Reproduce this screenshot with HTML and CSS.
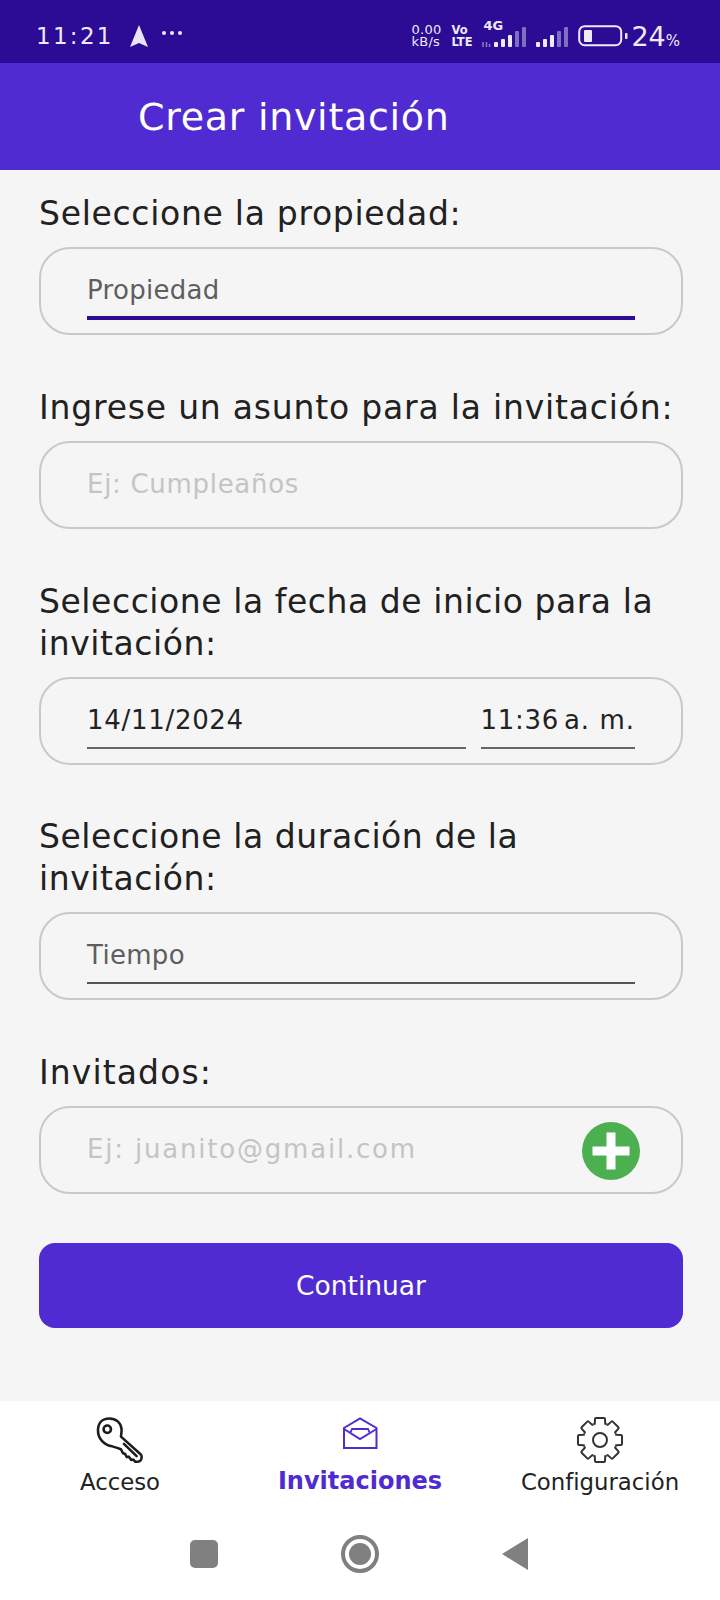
FILE: index.html
```html
<!DOCTYPE html>
<html lang="es">
<head>
<meta charset="utf-8">
<title>Crear invitación</title>
<link rel="stylesheet" href="styles.css">
</head>
<body>
<div class="screen">
  <div class="status">
    <div class="status-left">
      <span class="clock">11:21</span>
      <svg class="nav-arrow" width="20" height="24" viewBox="0 0 20 24"><path d="M10 1 L19 23 L10 19 L1 23 Z" fill="#e8e6f6"/></svg>
      <span class="dots"><i></i><i></i><i></i></span>
    </div>
    <div class="status-right">
      <span class="speed">0.00<br>kB/s</span>
      <span class="volte">Vo<br>LTE</span>
      <span class="net">
        <span class="fourg">4G</span>
        <svg width="56" height="24" viewBox="0 0 56 24">
          <path d="M3 16v5M6.500 16v5M9.500 18v3" stroke="#8d7fc9" stroke-width="1.500"/>
          <rect x="14" y="16" width="4" height="5" rx="1" fill="#eeeaf9"/>
          <rect x="21" y="13" width="4" height="8" rx="1" fill="#eeeaf9"/>
          <rect x="28" y="9" width="4" height="12" rx="1" fill="#eeeaf9"/>
          <rect x="35" y="5" width="4" height="16" rx="1" fill="#7e6fc0"/>
          <rect x="42" y="1" width="4" height="20" rx="1" fill="#7e6fc0"/>
        </svg>
      </span>
      <svg class="signal" width="36" height="24" viewBox="0 0 36 24">
        <rect x="0" y="16" width="4" height="5" rx="1" fill="#eeeaf9"/>
        <rect x="7" y="13" width="4" height="8" rx="1" fill="#eeeaf9"/>
        <rect x="14" y="9" width="4" height="12" rx="1" fill="#eeeaf9"/>
        <rect x="21" y="5" width="4" height="16" rx="1" fill="#7e6fc0"/>
        <rect x="28" y="1" width="4" height="20" rx="1" fill="#7e6fc0"/>
      </svg>
      <svg class="battery" width="50" height="22" viewBox="0 0 50 22">
        <rect x="1.200" y="1.200" width="42" height="19" rx="5.500" fill="none" stroke="#eeeaf9" stroke-width="2"/>
        <rect x="6" y="5" width="8" height="12" rx="1" fill="#eeeaf9"/>
        <rect x="47" y="8" width="2.500" height="6" rx="1" fill="#eeeaf9"/>
      </svg>
      <span class="pct">24<small>%</small></span>
    </div>
  </div>
  <header class="appbar"><h1>Crear invitación</h1></header>
  <main class="form">
    <section class="group">
      <label class="label">Seleccione la propiedad:</label>
      <div class="field">
        <div class="line line-active value-muted ls-a">Propiedad</div>
      </div>
    </section>
    <section class="group">
      <label class="label label-wide">Ingrese un asunto para la invitación:</label>
      <div class="field">
        <div class="line-none placeholder ls-b">Ej: Cumpleaños</div>
      </div>
    </section>
    <section class="group">
      <label class="label label-tight">Seleccione la fecha de inicio para la invitación:</label>
      <div class="field field-split">
        <div class="line value date">14/11/2024</div>
        <div class="line value time">11:36<span class="ampm">a. m.</span></div>
      </div>
    </section>
    <section class="group">
      <label class="label label-tight">Seleccione la duración de la invitación:</label>
      <div class="field">
        <div class="line line-dark value-muted ls-a">Tiempo</div>
      </div>
    </section>
    <section class="group group-last">
      <label class="label label-short">Invitados:</label>
      <div class="field field-add">
        <div class="line-none placeholder ls-c">Ej: juanito@gmail.com</div>
        <span class="add"><svg width="58" height="58" viewBox="0 0 58 58"><circle cx="29" cy="29" r="29" fill="#4caf50"/><path d="M29 10.500v37M10.500 29h37" stroke="#fff" stroke-width="9"/></svg></span>
      </div>
    </section>
    <button class="cta">Continuar</button>
  </main>
  <nav class="tabs">
    <div class="tab">
      <svg class="tab-icon" width="48" height="46" viewBox="0 0 48 47" fill="none" stroke="#1c1c1c" stroke-width="2.600" stroke-linejoin="round" stroke-linecap="round">
        <path d="M25 20 L45 38 Q46.500 39.500 46 42 Q45.500 45 43 45.500 L40 46 L37.500 43.500 L35.500 44 L33 40.500 L31 41 L29 37.500 L27 37 L25 33 Q20 31 16 30 C8 29 1.500 22 1.500 14 C1.500 6 6 1.500 13 1.500 C20 1.500 25 6 25.500 12 C26 15 25 18 25 20 Z"/>
        <circle cx="11" cy="12.500" r="3.800"/>
        <path d="M28 27.500 L41 40"/>
      </svg>
      <span class="tab-label">Acceso</span>
    </div>
    <div class="tab tab-active">
      <svg class="tab-icon" width="36" height="32" viewBox="0 0 36 32" fill="none" stroke="#4f2bd1" stroke-width="2">
        <path d="M2 11 L18 1.500 L34.500 11 V31 H2 Z"/>
        <path d="M2 12 L18 22 L34.500 12"/>
        <path d="M8.500 15.500 L10 12 H26 L27.500 15.500" stroke-width="1.800"/>
      </svg>
      <span class="tab-label">Invitaciones</span>
    </div>
    <div class="tab">
      <svg class="tab-icon" width="48" height="46" viewBox="-24 -23 48 46" fill="none" stroke="#333" stroke-width="2" stroke-linejoin="round">
        <defs><path id="tooth" d="M-6.500 -15.700 L-5.200 -16.200 L-5 -21 Q-5 -22 -4 -22 H4 Q5 -22 5 -21 L5.200 -16.200 L6.500 -15.700"/></defs>
        <use href="#tooth"/>
        <use href="#tooth" transform="rotate(45)"/>
        <use href="#tooth" transform="rotate(90)"/>
        <use href="#tooth" transform="rotate(135)"/>
        <use href="#tooth" transform="rotate(180)"/>
        <use href="#tooth" transform="rotate(225)"/>
        <use href="#tooth" transform="rotate(270)"/>
        <use href="#tooth" transform="rotate(315)"/>
        <circle cx="0" cy="0" r="7"/>
      </svg>
      <span class="tab-label">Configuración</span>
    </div>
  </nav>
  <div class="sysnav">
    <span class="sys-square"></span>
    <span class="sys-circle"><i></i></span>
    <svg class="sys-back" width="26" height="32" viewBox="0 0 26 32"><path d="M26 0 L0 16 L26 32 Z" fill="#808080"/></svg>
  </div>
</div>
</body>
</html>
```
FILE: styles.css
```css
* { box-sizing: border-box; }
html, body { margin: 0; padding: 0; }
body { font-family: "DejaVu Sans", sans-serif; background: #fff; }
.screen { width: 720px; height: 1600px; display: flex; flex-direction: column; overflow: hidden; }

.status { height: 63px; background: #2c0b95; color: #eeeaf9; display: flex; align-items: center; justify-content: space-between; padding: 9px 40px 0 36px; }
.status-left { display: flex; align-items: center; }
.clock { font-size: 23px; letter-spacing: 2.300px; width: 93px; }
.nav-arrow { margin-right: 13px; }
.dots { display: flex; gap: 4px; margin-top: -6px; }
.dots i { width: 4px; height: 4px; border-radius: 50%; background: #eeeaf9; display: block; }
.status-right { display: flex; align-items: center; }
.speed { font-size: 13px; line-height: 12px; width: 40px; letter-spacing: .3px; }
.volte { font-size: 11.500px; font-weight: 700; line-height: 12px; width: 29px; }
.net { position: relative; display: block; width: 56px; height: 24px; margin-top: 3px; }
.fourg { position: absolute; left: 3px; top: -8px; font-size: 13px; font-weight: 700; }
.net svg { display: block; }
.signal { margin-top: 3px; }
.battery { margin-left: 6px; }
.pct { font-size: 27px; margin-left: 3px; }
.pct small { font-size: 15px; }

.appbar { height: 107px; background: #4f2bd1; display: flex; align-items: center; padding: 0 0 0 138px; }
.appbar h1 { margin: 0; font-size: 38px; letter-spacing: .7px; font-weight: 400; color: #fff; }

.form { flex: 1; background: #f5f5f5; padding: 23px 37px 0 39px; display: flex; flex-direction: column; }
.group { margin-bottom: 51.750px; }
.group-last { margin-bottom: 49px; }
.label { display: block; font-size: 33px; letter-spacing: .7px; line-height: 42px; color: #212121; margin-bottom: 12px; }
.label-wide { letter-spacing: .8px; }
.label-tight { letter-spacing: .56px; }
.label-short { letter-spacing: 1.100px; }
.field { height: 88px; border: 2px solid #c9c9c9; border-radius: 31px; padding: 0 46px; display: flex; align-items: stretch; }
.line { flex: 1; height: 70px; padding-top: 21px; font-size: 26px; line-height: 40px; border-bottom: 2px solid #666; }
.line-active { border-bottom: 4px solid #2c0b95; height: 71px; }
.line-dark { border-bottom: 2px solid #555; }
.value-muted { color: #5e5e5e; }
.value { color: #222; letter-spacing: .7px; }
.ls-a { letter-spacing: .3px; }
.ls-b { letter-spacing: .7px; }
.ls-c { letter-spacing: 1.800px; padding-top: 22px; }
.line-none { flex: 1; padding-top: 21px; font-size: 26px; line-height: 40px; }
.placeholder { color: #c4c4c4; }
.field-split { gap: 15px; }
.date { flex: 1; }
.time { flex: 0 0 154px; margin-left: 0; white-space: nowrap; flex-basis: 151px; }
.ampm { margin-left: 5px; letter-spacing: 1px; }
.field-add { position: relative; }
.add { position: absolute; right: 41px; top: 14px; display: block; line-height: 0; }
.cta { height: 85px; width: 644px; border: 0; border-radius: 16px; background: #4f2bd1; color: #fff; font: 400 26.500px "DejaVu Sans", sans-serif; }

.tabs { height: 111px; background: #fff; display: grid; grid-template-columns: 240px 240px 240px; }
.tab { display: flex; flex-direction: column; align-items: center; padding-top: 16px; }
.tab-icon { display: block; }
.tab-label { font-size: 22.800px; line-height: 30px; color: #222; margin-top: 4px; }
.tab-active .tab-label { font-weight: 700; font-size: 24px; color: #4f2bd1; margin-top: 17px; }

.sysnav { height: 88px; background: #fff; display: flex; align-items: center; gap: 123px; padding: 0 0 4px 190px; }
.sys-square { width: 28px; height: 28px; border-radius: 5px; background: #808080; display: block; }
.sys-circle { width: 38px; height: 38px; border: 4px solid #808080; border-radius: 50%; display: flex; align-items: center; justify-content: center; }
.sys-circle i { width: 22px; height: 22px; border-radius: 50%; background: #808080; display: block; }
```
